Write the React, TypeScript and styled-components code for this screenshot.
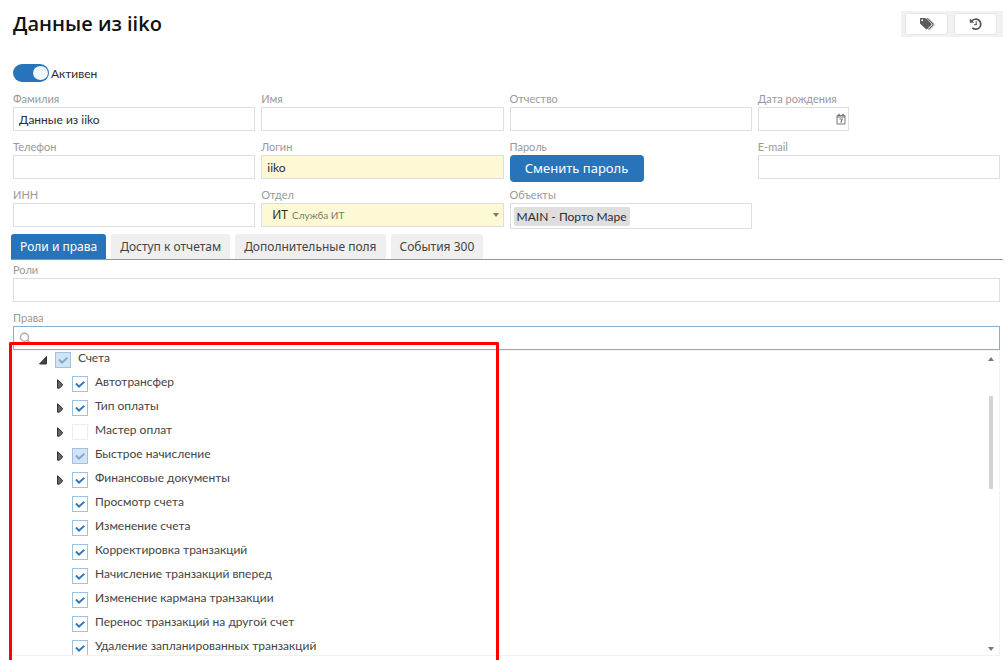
import React, { useState } from 'react';
import styled, { createGlobalStyle, css } from 'styled-components';

const blue = '#2874ba';
const line = '#dedede';
const textFont = 'Lato, "Noto Sans", sans-serif';
const wideFont = '"Noto Sans", "Open Sans", sans-serif';

const GlobalStyle = createGlobalStyle`
  *, *::before, *::after { box-sizing: border-box; }
  html, body { margin: 0; background: #fff; }
  body { font-family: ${textFont}; font-size: 12px; color: #2c2c2c; overflow: hidden; }
  input, button, select { font: inherit; color: inherit; margin: 0; }
`;

const Page = styled.main`
  min-height: 100vh;
  padding: 11px 3px 0 11px;
  overflow: hidden;
`;

const Header = styled.header`
  display: flex;
  justify-content: space-between;
  align-items: center;
  height: 26px;
  padding-left: 2px;
`;

const Title = styled.h1`
  margin: 0;
  font: 600 20px/26px "Open Sans", "Noto Sans", sans-serif;
  color: #111;
`;

const Tools = styled.div`
  display: flex;
  align-items: center;
  gap: 6px;
  height: 26px;
  padding: 0 6px 0 4px;
  background: #f1f1f1;
`;

const ToolButton = styled.button`
  display: flex;
  align-items: center;
  justify-content: center;
  width: 43px;
  height: 22px;
  padding: 0;
  border: 1px solid #e6e6e6;
  border-radius: 3px;
  background: #fff;
`;

const Form = styled.form`
  padding: 27px 3px 5px 2px;
`;

const Toggle = styled.label`
  display: flex;
  align-items: center;
  gap: 2px;
  width: max-content;
  height: 18px;
`;

const Switch = styled.input`
  appearance: none;
  width: 36px;
  height: 18px;
  border-radius: 9px;
  background: #a9a9a9;
  display: flex;
  padding: 2px 1px;

  &::before {
    content: '';
    width: 15px;
    height: 14px;
    border-radius: 50%;
    background: #f0f6fc;
  }
  &:checked { background: ${blue}; justify-content: flex-end; }
`;

const Fields = styled.div`
  display: grid;
  grid-template-columns: repeat(4, minmax(0, 1fr));
  gap: 6px;
  padding-top: 9px;
`;

const FieldBox = styled.div`
  display: flex;
  flex-direction: column;
  height: 42px;
`;

const Caption = styled.label`
  font-size: 11px;
  line-height: 16px;
  color: #999;
`;

const box = css`
  width: 100%;
  height: 24px;
  border: 1px solid ${line};
  background: #fff;
  border-radius: 0;
  outline: none;
`;

const TextInput = styled.input<{ $required?: boolean }>`
  ${box}
  padding: 0 5px;
  ${p => p.$required && 'background: #fdf9d5;'}
`;

const DateBox = styled.div`
  ${box}
  display: flex;
  align-items: center;
  width: 91px;
  padding-right: 2px;
`;

const DateInput = styled.input`
  flex: 1;
  min-width: 0;
  border: 0;
  padding: 0 4px;
  outline: none;
  background: transparent;
`;

const IconButton = styled.button`
  display: flex;
  padding: 0;
  border: 0;
  background: none;
`;

const PasswordButton = styled.button`
  width: 134px;
  height: 27px;
  flex: none;
  padding: 0;
  border: 0;
  border-radius: 4px;
  background: ${blue};
  color: #fff;
  font: 13px/27px ${wideFont};
`;

const Combo = styled.div`
  ${box}
  position: relative;
  display: flex;
  align-items: center;
  gap: 4px;
  padding: 0 4px 0 10px;
  background: #fdf9d5;
`;

const ComboCode = styled.span`
  font: 12px/20px ${wideFont};
`;

const ComboNote = styled.span`
  flex: 1;
  font-size: 10px;
  color: #7d7a68;
`;

const ComboSelect = styled.select`
  position: absolute;
  inset: 0;
  width: 100%;
  opacity: 0;
`;

const TagBox = styled.div`
  ${box}
  display: flex;
  align-items: center;
  height: 26px;
  padding: 0 3px;
`;

const Tag = styled.span`
  padding: 0 3px;
  border-radius: 2px;
  background: #dedede;
  font-size: 12px;
  line-height: 19px;
`;

const Tabs = styled.nav`
  display: flex;
  gap: 5px;
  border-bottom: 1px solid #6f9fc8;
`;

const Tab = styled.button<{ $active: boolean }>`
  height: 25px;
  padding: 0 9px;
  border: 0;
  border-radius: 3px 3px 0 0;
  background: ${p => (p.$active ? blue : '#efefef')};
  color: ${p => (p.$active ? '#fff' : '#444')};
  font: 12px/25px ${wideFont};
  white-space: nowrap;
`;

const Panel = styled.section`
  display: flex;
  flex-direction: column;
  padding: 2px 3px 0 2px;
`;

const RightsBox = styled.div`
  display: flex;
  flex-direction: column;
  margin-top: 6px;
`;

const SearchBox = styled.div`
  ${box}
  display: flex;
  align-items: center;
  gap: 4px;
  padding: 0 5px;
  border-color: #86b0d2;
`;

const SearchInput = styled(DateInput)`
  padding: 0;
`;

const TreeFrame = styled.div`
  position: relative;
  display: flex;
  justify-content: space-between;
  height: 306px;
  border: 1px solid #f2f2f2;
`;

const Tree = styled.ul`
  margin: 0;
  padding: 0 0 0 22px;
  list-style: none;
  height: 304px;
  overflow: hidden;
`;

const Node = styled.li<{ $level: number }>`
  display: flex;
  align-items: flex-start;
  height: 24px;
  padding-left: ${p => p.$level * 17}px;
`;

const Expander = styled.button`
  display: flex;
  align-items: center;
  justify-content: center;
  width: 13px;
  height: 18px;
  margin-right: 6px;
  padding: 0;
  border: 0;
  background: none;
`;

const NodeLabel = styled.label`
  display: flex;
  gap: 7px;
  line-height: 14px;
  color: #444;
  white-space: nowrap;
`;

const CheckHolder = styled.span`
  position: relative;
  display: flex;
  height: 17px;
  padding-top: 1px;

  svg { position: absolute; left: 0; top: 1px; pointer-events: none; }
`;

const Check = styled.input<{ $partial: boolean }>`
  appearance: none;
  width: 16px;
  height: 16px;
  border: 1px solid #eee;
  background: #fff;
  &:checked {
    border-color: #9dc3e0;
    background: ${p => (p.$partial ? '#d3e3f3' : '#fff')};
  }
`;

const ScrollTrack = styled.div`
  display: flex;
  flex-direction: column;
  align-items: center;
  width: 16px;
  padding: 6px 0 4px;
`;

const Thumb = styled.div`
  width: 4px;
  height: 93px;
  margin: 35px 0 auto;
  border-radius: 1px;
  background: #d3d3d3;
`;

const Highlight = styled.div`
  position: absolute;
  left: -5px;
  top: -9px;
  bottom: -20px;
  width: calc(50% - 3px);
  border: 3px solid #fe0000;
  border-bottom: 0;
  border-radius: 2px 2px 0 0;
  pointer-events: none;
`;

const TagsIcon = () => (
  <svg width="16" height="14" viewBox="0 0 16 14" aria-hidden="true">
    <path d="M1.2 1h4.5q.7 0 1.3.5l5.2 5.1q.7.7 0 1.4l-4 4q-.7.7-1.4 0L1.5 6.900Q1 6.400 1 5.700V1.700Q1 1 1.200 1Z" fill="#5b5b5b" />
    <path d="M7.800 1.200l6 5.600q.6.700 0 1.300l-4.300 4.400" fill="none" stroke="#6a6a6a" strokeWidth="1.100" />
    <path d="M9.500 1.400l5.500 5.300q.7.800 0 1.500l-4 4.300" fill="none" stroke="#8d8d8d" strokeWidth=".7" />
    <circle cx="3.200" cy="3.200" r="1" fill="#fff" />
  </svg>
);

const HistoryIcon = () => (
  <svg width="14" height="14" viewBox="0 0 14 14" fill="none" stroke="#555" aria-hidden="true">
    <path d="M2.700 4.300A5 5 0 1 1 3.300 10.800" strokeWidth="1.700" />
    <path d="M.8 1.500v4.300h4.400Z" fill="#555" stroke="none" />
    <path d="M7.200 4.300v3.400H5" strokeWidth="1.100" />
  </svg>
);

const CalendarIcon = () => (
  <svg width="10" height="12" viewBox="0 0 10 12" fill="none" stroke="#777" aria-hidden="true">
    <path d="M1 2.500h8v8.500H1ZM1 4h8" />
    <path d="M3 .7v2.500M7 .7v2.500" strokeWidth="1.500" />
    <path d="M3.500 6h2.700L4.900 9.700" strokeWidth="1.100" />
  </svg>
);

const SearchIcon = () => (
  <svg width="13" height="13" viewBox="0 0 13 13" fill="none" stroke="#aaa" aria-hidden="true">
    <circle cx="5.500" cy="5.300" r="4" strokeWidth="1.400" />
    <path d="M8.500 8.300l3.300 3.500" strokeWidth="1.900" />
  </svg>
);

const Caret = ({ up = false }: { up?: boolean }) => (
  <svg width="6" height="4" viewBox="0 0 6 4" aria-hidden="true">
    <path d={up ? 'M0 4L3 0l3 4Z' : 'M0 0h6L3 4Z'} fill="#777" />
  </svg>
);

const Triangle = ({ open }: { open: boolean }) => (
  <svg width="10" height="10" viewBox="0 0 10 10" aria-hidden="true">
    <path d={open ? 'M8.500 1.500v7.500H1.500Z' : 'M2.500.8v8.400h1.800L7.300 6.500V5Z'} fill={open ? '#444' : '#666'} stroke="#333" strokeLinejoin="round" />
  </svg>
);

const Tick = ({ faded }: { faded: boolean }) => (
  <svg width="16" height="16" viewBox="0 0 16 16" fill="none" aria-hidden="true">
    <path d="M4 7.500l3 3.200 5.300-5" stroke={faded ? '#7ea9d3' : '#3577b8'} strokeWidth="2" />
  </svg>
);

type FieldProps = { id: string; label: string; children?: React.ReactNode; value?: string; required?: boolean };
const Field = ({ id, label, children, value, required }: FieldProps) => (
  <FieldBox>
    <Caption htmlFor={id}>{label}</Caption>
    {children ?? <TextInput id={id} defaultValue={value} $required={required} />}
  </FieldBox>
);

type State = 'on' | 'partial' | 'off';
type Item = { name: string; state: State; level: number; arrow?: 'open' | 'closed' };
const items: Item[] = [
  { name: 'Счета', state: 'partial', level: 0, arrow: 'open' },
  { name: 'Автотрансфер', state: 'on', level: 1, arrow: 'closed' },
  { name: 'Тип оплаты', state: 'on', level: 1, arrow: 'closed' },
  { name: 'Мастер оплат', state: 'off', level: 1, arrow: 'closed' },
  { name: 'Быстрое начисление', state: 'partial', level: 1, arrow: 'closed' },
  { name: 'Финансовые документы', state: 'on', level: 1, arrow: 'closed' },
  { name: 'Просмотр счета', state: 'on', level: 1 },
  { name: 'Изменение счета', state: 'on', level: 1 },
  { name: 'Корректировка транзакций', state: 'on', level: 1 },
  { name: 'Начисление транзакций вперед', state: 'on', level: 1 },
  { name: 'Изменение кармана транзакции', state: 'on', level: 1 },
  { name: 'Перенос транзакций на другой счет', state: 'on', level: 1 },
  { name: 'Удаление запланированных транзакций', state: 'on', level: 1 },
];

const TreeNode = ({ item }: { item: Item }) => {
  const [checked, setChecked] = useState(item.state !== 'off');
  const partial = item.state === 'partial';
  return (
    <Node $level={item.level}>
      <Expander type="button" disabled={!item.arrow} aria-label={item.arrow ? item.name : undefined}>
        {item.arrow && <Triangle open={item.arrow === 'open'} />}
      </Expander>
      <NodeLabel>
        <CheckHolder>
          <Check type="checkbox" checked={checked} $partial={partial} onChange={e => setChecked(e.target.checked)} />
          {checked && <Tick faded={partial} />}
        </CheckHolder>
        {item.name}
      </NodeLabel>
    </Node>
  );
};

const tabNames = ['Роли и права', 'Доступ к отчетам', 'Дополнительные поля', 'События 300'];

export default function App() {
  const [tab, setTab] = useState(0);
  return (
    <Page>
      <GlobalStyle />
      <Header>
        <Title>Данные из iiko</Title>
        <Tools>
          <ToolButton type="button" aria-label="Метки"><TagsIcon /></ToolButton>
          <ToolButton type="button" aria-label="История"><HistoryIcon /></ToolButton>
        </Tools>
      </Header>
      <Form onSubmit={e => e.preventDefault()}>
        <Toggle><Switch type="checkbox" defaultChecked />Активен</Toggle>
        <Fields>
          <Field id="surname" label="Фамилия" value="Данные из iiko" />
          <Field id="name" label="Имя" />
          <Field id="patronymic" label="Отчество" />
          <Field id="birth" label="Дата рождения">
            <DateBox>
              <DateInput id="birth" />
              <IconButton type="button" aria-label="Календарь"><CalendarIcon /></IconButton>
            </DateBox>
          </Field>
          <Field id="phone" label="Телефон" />
          <Field id="login" label="Логин" value="iiko" required />
          <Field id="password" label="Пароль">
            <PasswordButton id="password" type="button">Сменить пароль</PasswordButton>
          </Field>
          <Field id="email" label="E-mail" />
          <Field id="inn" label="ИНН" />
          <Field id="department" label="Отдел">
            <Combo>
              <ComboCode>ИТ</ComboCode>
              <ComboNote>Служба ИТ</ComboNote>
              <Caret />
              <ComboSelect id="department"><option>ИТ</option></ComboSelect>
            </Combo>
          </Field>
          <Field id="objects" label="Объекты">
            <TagBox id="objects"><Tag>MAIN - Порто Маре</Tag></TagBox>
          </Field>
        </Fields>
      </Form>
      <Tabs>
        {tabNames.map((name, i) => (
          <Tab key={name} type="button" $active={i === tab} onClick={() => setTab(i)}>{name}</Tab>
        ))}
      </Tabs>
      <Panel>
        <Field id="roles" label="Роли" />
        <RightsBox>
          <Caption htmlFor="rights">Права</Caption>
          <SearchBox>
            <SearchIcon />
            <SearchInput id="rights" />
          </SearchBox>
        </RightsBox>
        <TreeFrame>
          <Tree>{items.map(item => <TreeNode key={item.name} item={item} />)}</Tree>
          <ScrollTrack>
            <Caret up />
            <Thumb />
            <Caret />
          </ScrollTrack>
          <Highlight />
        </TreeFrame>
      </Panel>
    </Page>
  );
}
